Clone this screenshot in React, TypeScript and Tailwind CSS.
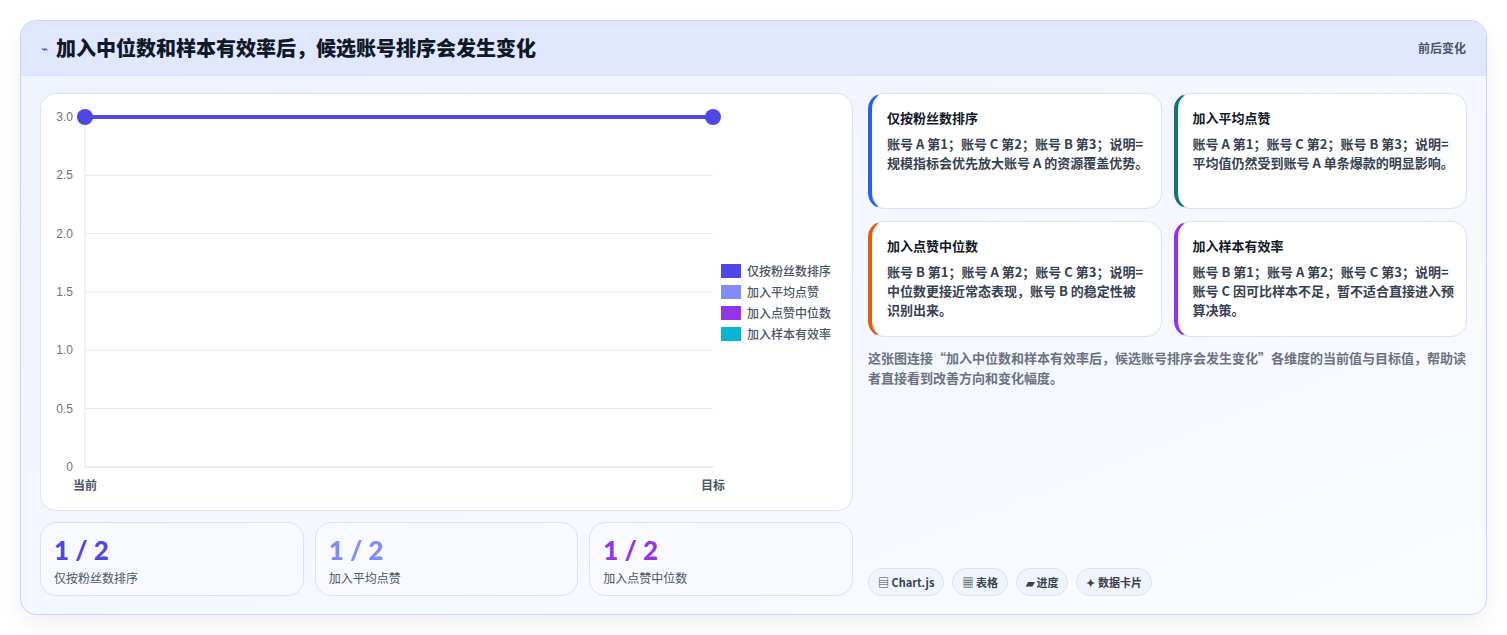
import React from "react";

const font = { fontFamily: '"Noto Sans CJK SC", "Noto Sans", sans-serif' };

const legend = [
  ["仅按粉丝数排序", "#4f46e5"],
  ["加入平均点赞", "#818cf8"],
  ["加入点赞中位数", "#9333ea"],
  ["加入样本有效率", "#06b6d4"],
];

const cards = [
  ["仅按粉丝数排序", "账号 A 第1；账号 C 第2；账号 B 第3；说明=规模指标会优先放大账号 A 的资源覆盖优势。", "border-l-[#2563eb]"],
  ["加入平均点赞", "账号 A 第1；账号 C 第2；账号 B 第3；说明=平均值仍然受到账号 A 单条爆款的明显影响。", "border-l-[#0f766e]"],
  ["加入点赞中位数", "账号 B 第1；账号 A 第2；账号 C 第3；说明=中位数更接近常态表现，账号 B 的稳定性被识别出来。", "border-l-[#ea580c]"],
  ["加入样本有效率", "账号 B 第1；账号 A 第2；账号 C 第3；说明=账号 C 因可比样本不足，暂不适合直接进入预算决策。", "border-l-[#9333ea]"],
];

function Chart() {
  const ticks = [3.0, 2.5, 2.0, 1.5, 1.0, 0.5, 0];
  const top = 23, bottom = 373, left = 44, right = 672;
  return (
    <svg width="690" height="405" className="block shrink-0">
      {ticks.map((t, i) => {
        const y = top + ((3 - t) / 3) * (bottom - top);
        return (
          <g key={i}>
            <line x1={left} x2={right} y1={y} y2={y} stroke={t === 0 ? "#cbd5e1" : "#e5e7eb"} />
            <text x={left - 12} y={y + 4} textAnchor="end" fontSize="12" fill="#6b7280" fontFamily="Liberation Sans, sans-serif">
              {t === 0 ? "0" : t.toFixed(1)}
            </text>
          </g>
        );
      })}
      <line x1={left} x2={left} y1={top} y2={bottom} stroke="#e5e7eb" />
      <line x1={left} x2={right} y1={top} y2={top} stroke="#4f46e5" strokeWidth="4" />
      <circle cx={left} cy={top} r="8" fill="#4f46e5" />
      <circle cx={right} cy={top} r="8" fill="#4f46e5" />
      <text x={left} y={bottom + 23} textAnchor="middle" fontSize="12" fontWeight="bold" fill="#4b5563" style={font}>当前</text>
      <text x={right} y={bottom + 23} textAnchor="middle" fontSize="12" fontWeight="bold" fill="#4b5563" style={font}>目标</text>
    </svg>
  );
}

export default function App() {
  return (
    <div className="min-h-[635px] bg-white p-5" style={font}>
      <div className="rounded-2xl border border-[#c7d2fe] bg-gradient-to-br from-[#eef2ff] to-[#fbfcff] shadow-[0_10px_25px_rgba(0,0,0,0.06)] overflow-hidden">
        <div className="h-[55px] flex items-center justify-between px-5 bg-[#e0e7ff] border-b border-[#dbe3fb]">
          <div className="flex items-center gap-2">
            <span className="text-[#4f46e5] text-xs">⌁</span>
            <span className="text-[20px] font-black text-[#111827]">加入中位数和样本有效率后，候选账号排序会发生变化</span>
          </div>
          <span className="text-xs font-bold text-[#4b5563]">前后变化</span>
        </div>
        <div className="flex gap-[15px] p-[17px_19px_18px_19px]">
          <div className="w-[813px] flex flex-col gap-[11px]">
            <div className="h-[418px] bg-white rounded-2xl border border-[#dbe3f3] flex">
              <Chart />
              <div className="flex flex-col gap-[5px] justify-center -ml-[10px]">
                {legend.map(([l, c]) => (
                  <div key={l} className="flex items-center gap-[6px] text-xs font-medium text-[#4b5563]">
                    <span className="w-5 h-[14px]" style={{ background: c }} />
                    {l}
                  </div>
                ))}
              </div>
            </div>
            <div className="grid grid-cols-3 gap-[11px]">
              {[["仅按粉丝数排序", "text-[#4f46e5]"], ["加入平均点赞", "text-[#818cf8]"], ["加入点赞中位数", "text-[#9333ea]"]].map(([l, c]) => (
                <div key={l} className="h-[74px] rounded-2xl border border-[#dbe3f3] bg-[#f8faff] px-[13px] pt-[13px]">
                  <div className={`text-[26px] leading-[28px] font-black ${c}`} style={{ fontFamily: "Lato, sans-serif" }}>1 / 2</div>
                  <div className="text-xs text-[#4b5563] mt-[6px]">{l}</div>
                </div>
              ))}
            </div>
          </div>
          <div className="flex-1 flex flex-col">
            <div className="grid grid-cols-2 gap-x-[12px] gap-y-[12px]">
              {cards.map(([t, d, b]) => (
                <div key={t} className={`h-[116px] bg-white rounded-2xl border border-[#dbe3f3] border-l-4 ${b} pl-[15px] pr-3 pt-[14px]`}>
                  <div className="text-[13px] font-bold text-[#111827] leading-5">{t}</div>
                  <div className="text-[13px] font-bold text-[#374151] leading-[19px] mt-[6px] break-all">{d}</div>
                </div>
              ))}
            </div>
            <div className="text-[13px] font-bold text-[#6b7280] leading-[20px] mt-[11px]">
              这张图连接“加入中位数和样本有效率后，候选账号排序会发生变化”各维度的当前值与目标值，帮助读者直接看到改善方向和变化幅度。
            </div>
            <div className="mt-auto flex gap-2">
              {["▤ Chart.js", "▦ 表格", "▰ 进度", "✦ 数据卡片"].map((c) => (
                <span key={c} className="h-[28px] px-[9px] flex items-center rounded-full border border-[#dbe3f3] bg-[#f1f5f9] text-[11px] font-bold text-[#374151]">{c}</span>
              ))}
            </div>
          </div>
        </div>
      </div>
    </div>
  );
}
